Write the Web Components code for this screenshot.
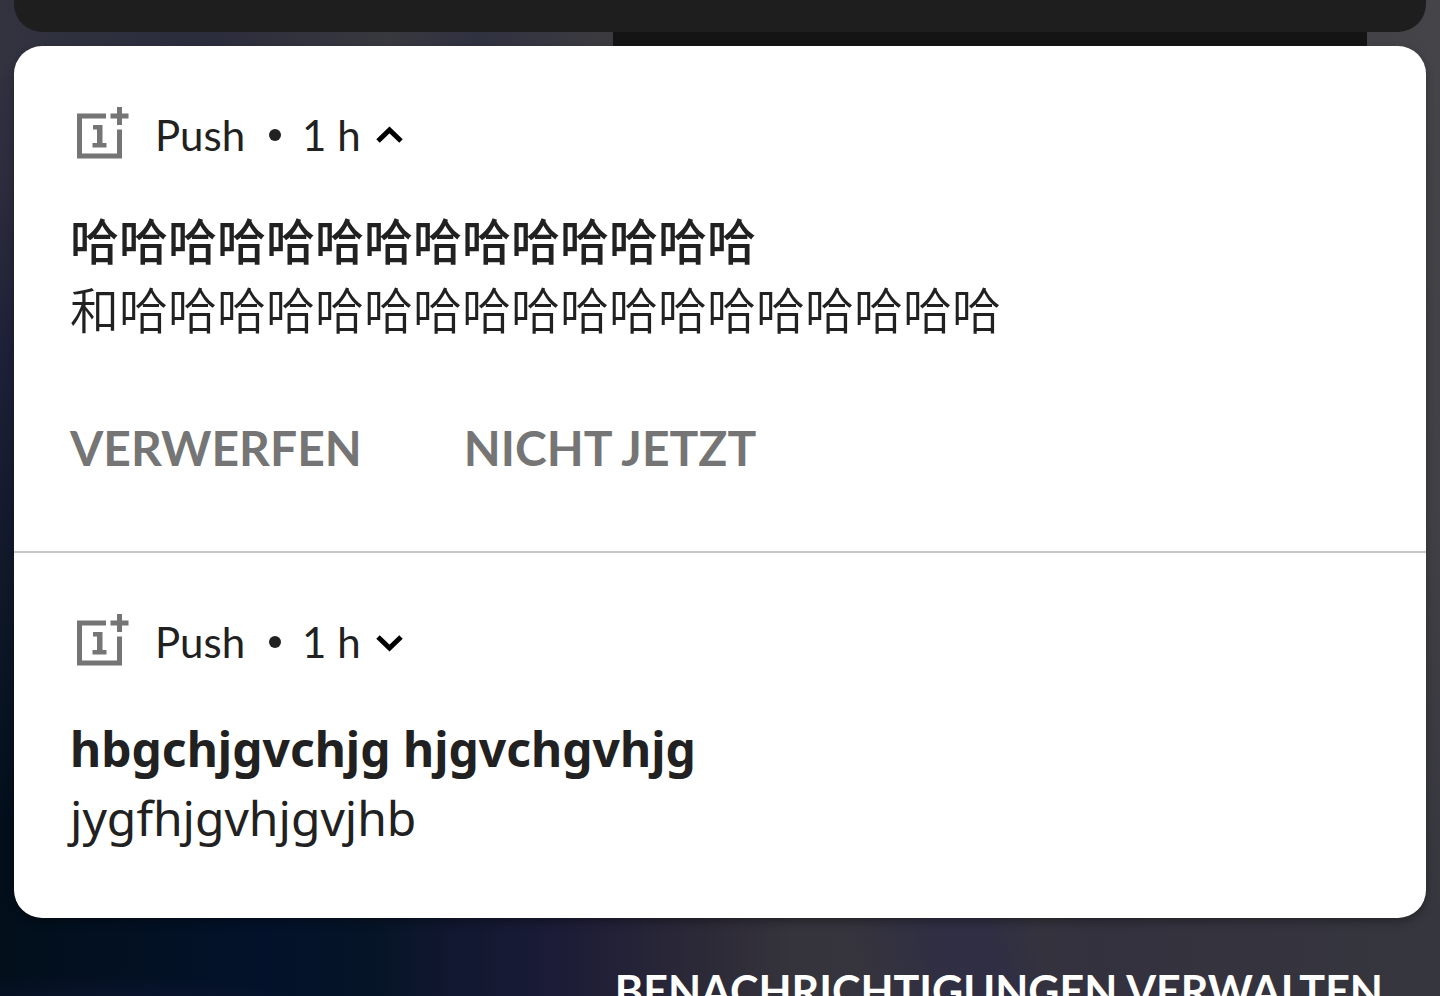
<!DOCTYPE html>
<html lang="de">
<head>
<meta charset="utf-8">
<meta name="viewport" content="width=device-width, initial-scale=1">
<title>Benachrichtigungen</title>
<style>
  html, body { height: 100%; }
  body {
    margin: 0;
    overflow: hidden;
    font-family: "Lato", "Noto Sans CJK SC", sans-serif;
    color: #212121;
    background: #0a0f22;
  }
</style>
</head>
<body>
<notification-shade>
  <push-notification app="Push" age="1 h" expanded>
    <span slot="title" lang="zh">哈哈哈哈哈哈哈哈哈哈哈哈哈哈</span>
    <span slot="text" lang="zh">和哈哈哈哈哈哈哈哈哈哈哈哈哈哈哈哈哈哈</span>
    <action-button slot="actions">VERWERFEN</action-button>
    <action-button slot="actions">NICHT JETZT</action-button>
  </push-notification>
  <push-notification app="Push" age="1 h">
    <span slot="title">hbgchjgvchjg hjgvchgvhjg</span>
    <span slot="text">jygfhjgvhjgvjhb</span>
  </push-notification>
  <action-button slot="footer" tone="light">BENACHRICHTIGUNGEN VERWALTEN</action-button>
</notification-shade>

<script>
// <notification-shade> — wallpaper, the panel above and the card that stacks the notifications.
class NotificationShade extends HTMLElement {
  constructor() {
    super();
    this.attachShadow({ mode: "open" });
  }
  connectedCallback() {
    this.shadowRoot.innerHTML = `
      <style>
        :host {
          display: block; box-sizing: border-box; min-height: 100%; padding: 0 14px;
          background:
            linear-gradient(to right, #32333f 0%, #2b2c3c 14%, #38383e 27%, #303140 33%, #3b3b3f 42%, #414045 90%, #454449 100%) top / 100% 76px no-repeat,
            radial-gradient(ellipse 18% 6% at 7% 101%, #13193a 0%, transparent 100%),
            linear-gradient(to bottom, #343541 0%, #2b2c3d 18%, #1d2036 35%, transparent 80%) left / 44px 100% no-repeat,
            linear-gradient(to bottom, #454449 0%, #414046 50%, transparent 90%) right / 44px 100% no-repeat,
            linear-gradient(75deg, transparent 51%, rgba(40, 40, 74, 0.5) 56%, rgba(40, 40, 74, 0.5) 59%, transparent 62%),
            linear-gradient(to right, #020f1b 0%, #03122a 18%, #061427 26%, #10172f 31%, #1c1c37 39%, #2b2837 48%, #35333b 55%, #37353d 67%, #33313e 76%, #35343e 88%, #36363e 100%);
        }
        .panel { height: 32px; background: #1e1e1e; border-radius: 0 0 28px 28px; }
        .behind { width: 53.4%; height: 14px; margin: 0 59px 0 auto; background: #141414; }
        .card { background: #fff; border-radius: 28px; box-shadow: 0 4px 8px rgba(0, 0, 0, 0.3); }
        .footer { display: flex; justify-content: flex-end; padding: 38px 43px 0 0; }
      </style>
      <div class="panel"></div>
      <div class="behind"></div>
      <main class="card"><slot></slot></main>
      <div class="footer"><slot name="footer"></slot></div>
    `;
  }
}

// <push-notification app="Push" age="1 h" expanded> — header, title, text and optional actions.
class PushNotification extends HTMLElement {
  static get observedAttributes() { return ["app", "age", "expanded"]; }
  constructor() {
    super();
    this.attachShadow({ mode: "open" });
  }
  connectedCallback() { this._render(); }
  attributeChangedCallback() { this._render(); }

  _render() {
    const app = this.getAttribute("app") || "";
    const age = this.getAttribute("age") || "";
    const expanded = this.hasAttribute("expanded");
    const chevron = expanded ? "M2 15 13.500 4 25 15" : "M2 4 13.500 15 25 4";
    this.shadowRoot.innerHTML = `
      <style>
        :host { display: block; padding: 59px 56px 66px; }
        :host([expanded]) { padding-bottom: 69px; }
        :host(:not(:last-of-type)) { border-bottom: 2px solid #c8c8c8; }
        .head { display: flex; align-items: center; height: 60px; font-size: 42px; line-height: 60px; }
        .logo { width: 66px; height: 60px; margin-right: 19px; fill: #757575; }
        .dot { width: 12px; height: 12px; margin: 0 21px 0 24px; border-radius: 50%; background: #212121; }
        .toggle { display: flex; margin-left: 15px; padding: 0; border: 0; background: none; cursor: pointer; }
        .toggle svg { width: 27px; height: 19px; fill: none; stroke: #000; stroke-width: 5; }
        .copy { margin-top: 42px; line-height: 69px; }
        .title, .text { margin: 0; font-size: 49px; }
        ::slotted(span) { display: block; font-family: "Noto Sans", sans-serif; font-size: 48px; }
        ::slotted(:lang(zh)) { font-family: "Lato", "Noto Sans CJK SC", sans-serif; font-size: 49px; }
        .title { font-weight: 700; }
        .text { font-weight: 400; }
        slot[name="title"]::slotted(:lang(zh)) { font-weight: 500; }
        slot[name="text"]::slotted(:lang(zh)) { font-weight: 350; }
        .actions { display: flex; gap: 102px; margin-top: 68px; }
      </style>
      <article>
        <header class="head">
          <svg class="logo" viewBox="0 0 66 60" aria-hidden="true">
            <path d="M7 8.500H36V13.500H12V48.500H47V24.500H52V53.500H7Z"/>
            <path d="M47 2H52V8.500H58.500V13.500H52V20H47V13.500H40.500V8.500H47Z"/>
            <path d="M23 20H32.500V38H36.500V42.500H22.500V38H27V24.500H23Z"/>
          </svg>
          <span>${app}</span>
          <span class="dot"></span>
          <span>${age}</span>
          <button class="toggle" type="button" aria-expanded="${expanded}" aria-label="Details">
            <svg viewBox="0 0 27 19"><path d="${chevron}"/></svg>
          </button>
        </header>
        <div class="copy">
          <h2 class="title"><slot name="title"></slot></h2>
          <p class="text"><slot name="text"></slot></p>
        </div>
        ${expanded ? `<div class="actions"><slot name="actions"></slot></div>` : ""}
      </article>
    `;
  }
}

// <action-button tone="light"> — flat text button.
class ActionButton extends HTMLElement {
  constructor() {
    super();
    this.attachShadow({ mode: "open" });
  }
  connectedCallback() {
    this.shadowRoot.innerHTML = `
      <style>
        :host { display: block; }
        button {
          padding: 0; border: 0; background: none; color: #757575; cursor: pointer;
          font: 700 48px/69px "Lato", sans-serif; white-space: nowrap;
        }
        :host([tone="light"]) button { color: #fff; font-size: 43px; }
      </style>
      <button type="button"><slot></slot></button>
    `;
  }
}

customElements.define("notification-shade", NotificationShade);
customElements.define("push-notification", PushNotification);
customElements.define("action-button", ActionButton);
</script>
</body>
</html>
